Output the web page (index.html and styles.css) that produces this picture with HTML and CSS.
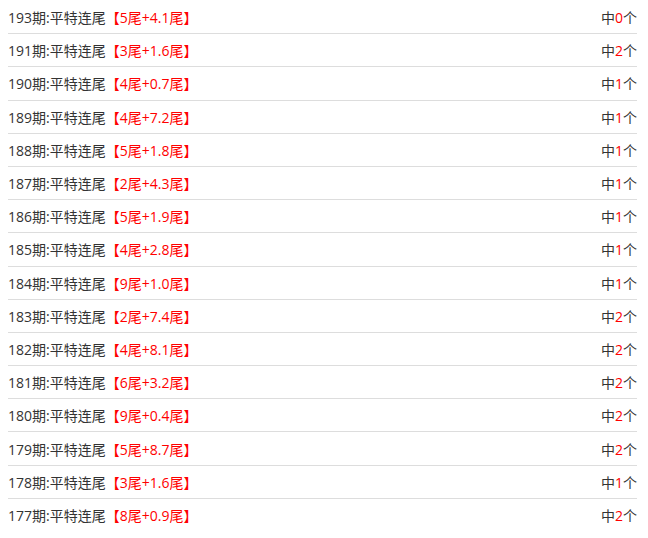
FILE: index.html
```html
<!DOCTYPE html>
<html lang="zh">
<head>
<meta charset="utf-8">
<link rel="stylesheet" href="styles.css">
</head>
<body>
<ul class="list">
  <li class="row"><span class="title">193期:平特连尾<em class="hl">【5尾+4.1尾】</em></span><span class="res">中<em class="hl">0</em>个</span></li>
  <li class="row"><span class="title">191期:平特连尾<em class="hl">【3尾+1.6尾】</em></span><span class="res">中<em class="hl">2</em>个</span></li>
  <li class="row"><span class="title">190期:平特连尾<em class="hl">【4尾+0.7尾】</em></span><span class="res">中<em class="hl">1</em>个</span></li>
  <li class="row"><span class="title">189期:平特连尾<em class="hl">【4尾+7.2尾】</em></span><span class="res">中<em class="hl">1</em>个</span></li>
  <li class="row"><span class="title">188期:平特连尾<em class="hl">【5尾+1.8尾】</em></span><span class="res">中<em class="hl">1</em>个</span></li>
  <li class="row"><span class="title">187期:平特连尾<em class="hl">【2尾+4.3尾】</em></span><span class="res">中<em class="hl">1</em>个</span></li>
  <li class="row"><span class="title">186期:平特连尾<em class="hl">【5尾+1.9尾】</em></span><span class="res">中<em class="hl">1</em>个</span></li>
  <li class="row"><span class="title">185期:平特连尾<em class="hl">【4尾+2.8尾】</em></span><span class="res">中<em class="hl">1</em>个</span></li>
  <li class="row"><span class="title">184期:平特连尾<em class="hl">【9尾+1.0尾】</em></span><span class="res">中<em class="hl">1</em>个</span></li>
  <li class="row"><span class="title">183期:平特连尾<em class="hl">【2尾+7.4尾】</em></span><span class="res">中<em class="hl">2</em>个</span></li>
  <li class="row"><span class="title">182期:平特连尾<em class="hl">【4尾+8.1尾】</em></span><span class="res">中<em class="hl">2</em>个</span></li>
  <li class="row"><span class="title">181期:平特连尾<em class="hl">【6尾+3.2尾】</em></span><span class="res">中<em class="hl">2</em>个</span></li>
  <li class="row"><span class="title">180期:平特连尾<em class="hl">【9尾+0.4尾】</em></span><span class="res">中<em class="hl">2</em>个</span></li>
  <li class="row"><span class="title">179期:平特连尾<em class="hl">【5尾+8.7尾】</em></span><span class="res">中<em class="hl">2</em>个</span></li>
  <li class="row"><span class="title">178期:平特连尾<em class="hl">【3尾+1.6尾】</em></span><span class="res">中<em class="hl">1</em>个</span></li>
  <li class="row"><span class="title">177期:平特连尾<em class="hl">【8尾+0.9尾】</em></span><span class="res">中<em class="hl">2</em>个</span></li>
</ul>
</body>
</html>
```
FILE: styles.css
```css
html, body {
  margin: 0;
  padding: 0;
  background: #fff;
}
body {
  padding: 1px 8px 0;
  font-family: "Open Sans", "Noto Sans CJK SC", sans-serif;
  font-size: 14px;
  color: #333;
}
.list {
  list-style: none;
  margin: 0;
  padding: 0;
  width: 629px;
}
.row {
  display: flex;
  justify-content: space-between;
  align-items: center;
  height: 32.2px;
  border-bottom: 1px solid #ddd;
}
.row:last-child {
  border-bottom: none;
}
.hl {
  font-style: normal;
  color: #f00;
}
```
